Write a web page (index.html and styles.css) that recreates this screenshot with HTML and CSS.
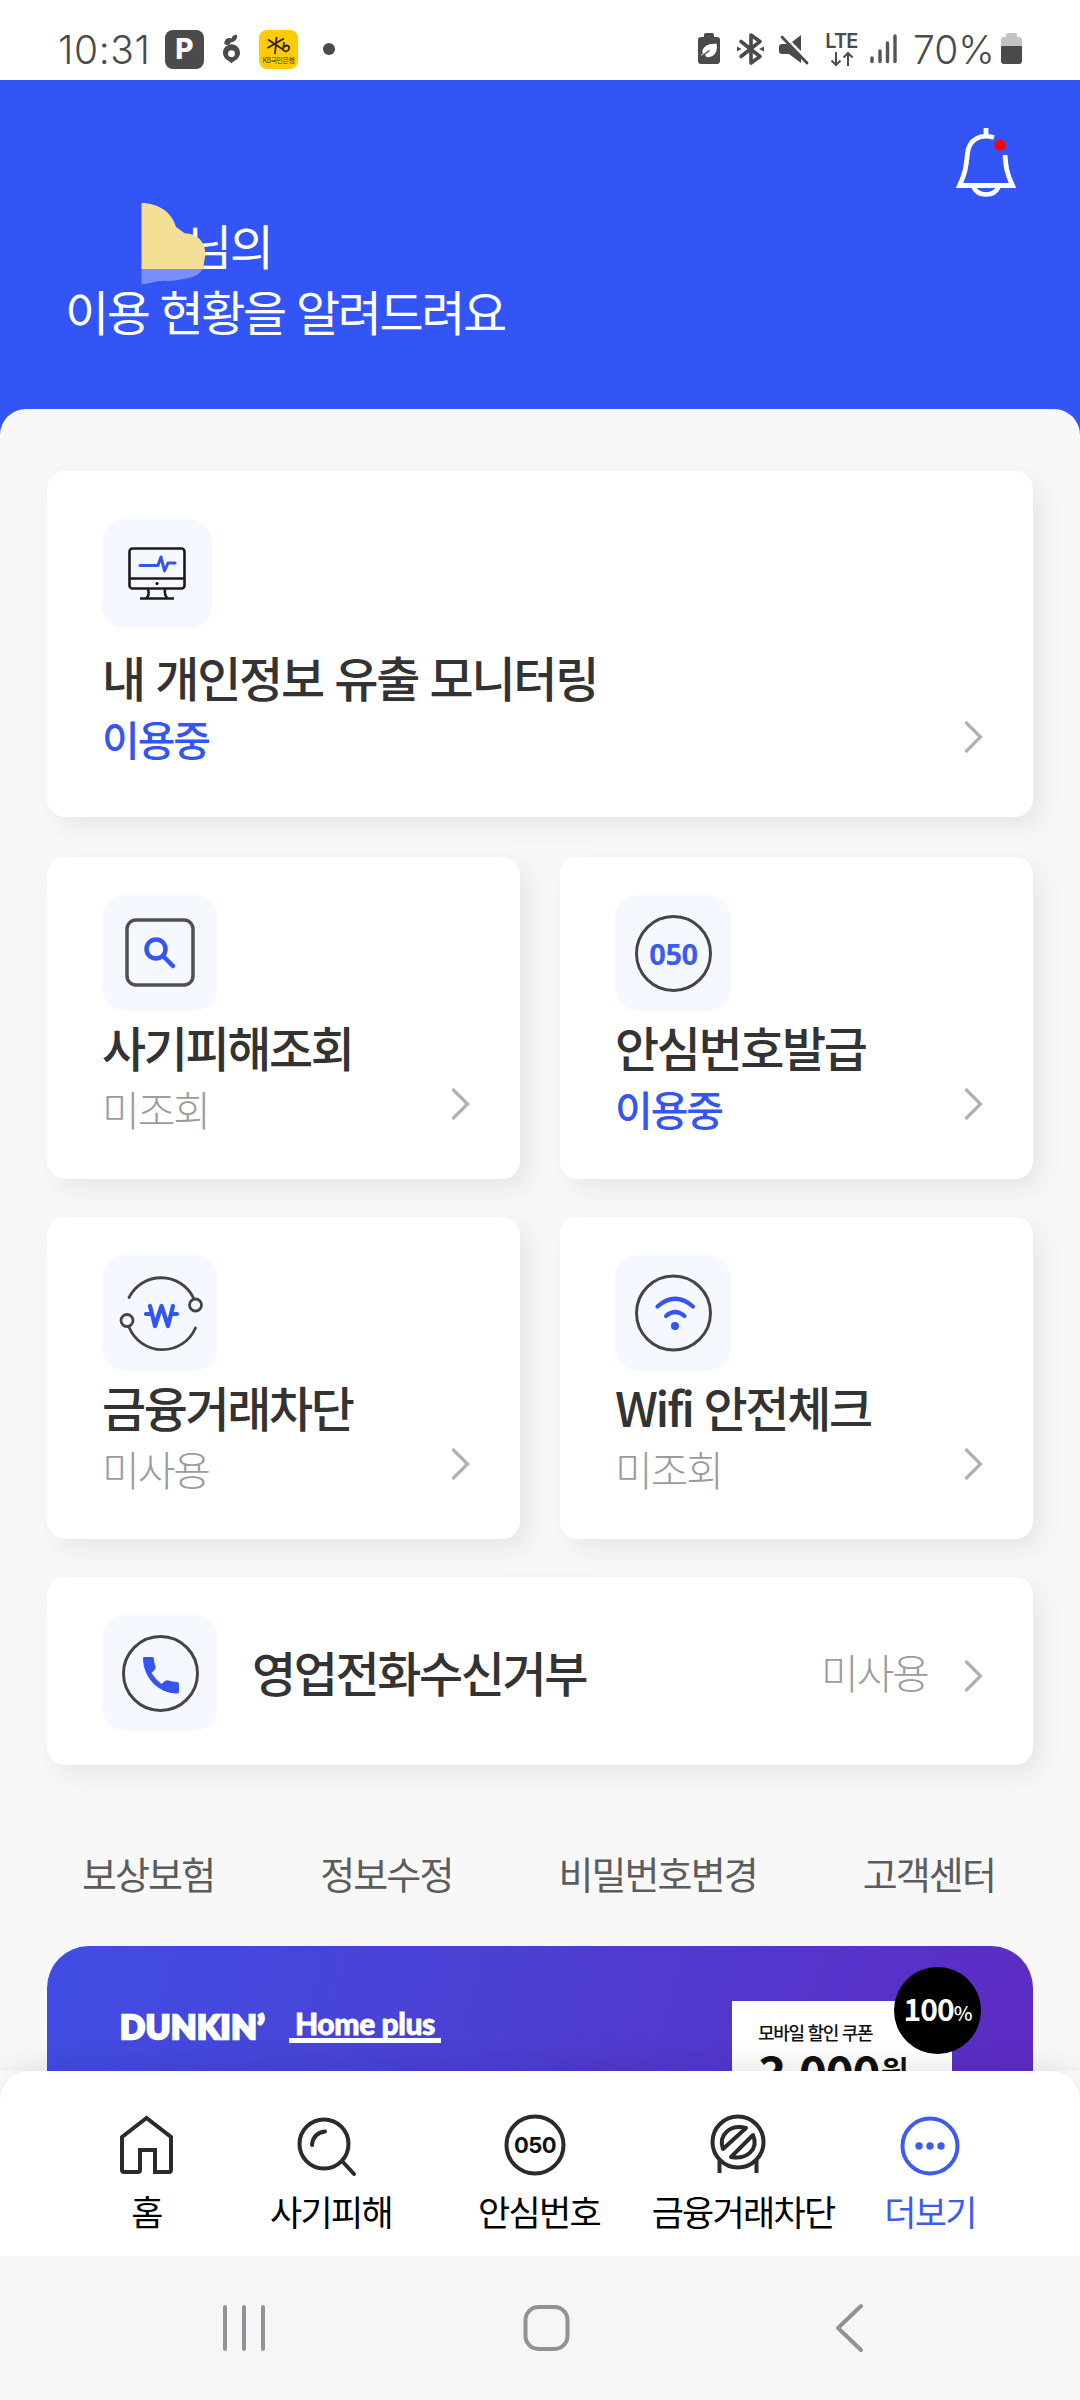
FILE: index.html
```html
<!DOCTYPE html>
<html lang="ko">
<head>
<meta charset="utf-8">
<title>이용 현황</title>
<link rel="stylesheet" href="styles.css">
</head>
<body>
<div class="phone">
  <div class="status-bar">
    <span class="clock">10:31</span>
    <span class="badge-p">P</span>
    <svg class="ic-drop" viewBox="0 0 18 30"><path d="M1.500 10C1 5 5 2 9 4C10 0 15-1 15 1C15 6 11 8 8 8Q7 12 1.500 10Z" fill="#4b4b4b"/><path d="M9 10C14 10 18 14 18 19C18 25 13 27 9 30C5 27 0 25 0 19C0 14 4 10 9 10Z" fill="#4b4b4b"/><circle cx="9" cy="20" r="3.600" fill="#fff"/></svg>
    <span class="kb"><svg viewBox="0 0 39 26"><path d="M9 9.500L24 19.500M8.500 18L25 8.500M17.500 7L16 24M25 12L24 20.500M24.500 17.500C27 14 31 15.500 30 19C29 22 25 22 24 19.500" fill="none" stroke="#2b2410" stroke-width="1.800"/></svg><b>KB국민은행</b></span>
    <span class="dot"></span>
    <span class="grow"></span>
    <svg class="st" style="width:22px" viewBox="0 0 22 32"><path d="M6 1.500Q6 0 8 0H14Q16 0 16 1.500V4H19Q22 4 22 7V28Q22 31 19 31H3Q0 31 0 28V7Q0 4 3 4H6Z" fill="#4b4b4b"/><path d="M3.500 22.500L10 18.500M5 20C5 14 10 11 18 11.500C19 19 15 25 8 23" stroke="#fff" stroke-width="1.500" fill="#fff"/><path d="M4 23L11.500 17.500" stroke="#4b4b4b" stroke-width="1.500"/></svg>
    <svg class="st bt" style="width:27px" viewBox="0 0 27 32"><path d="M4 8.500L23 23.500L14 30V2L23 8.500L4 23.500" fill="none" stroke="#4b4b4b" stroke-width="3.600" stroke-linejoin="round" stroke-linecap="round"/><path d="M0 13.500L4.500 16L0 18.500ZM27 13.500L22 16L27 18.500Z" fill="#4b4b4b"/></svg>
    <svg class="st mute" style="width:30px" viewBox="0 0 30 32"><path d="M0 14Q0 11 3 11H8L22 25V30L10 21H3Q0 21 0 18ZM13 9L22 2V18Z" fill="#4b4b4b"/><path d="M3 4L28 30" stroke="#4b4b4b" stroke-width="2.800" stroke-linecap="round"/></svg>
    <span class="lte"><b>LTE</b><svg viewBox="0 0 24 16"><path d="M6 1V14M1.500 9.500L6 14L10.500 9.500M18 15V2M13.500 6.500L18 2L22.500 6.500" fill="none" stroke="#4b4b4b" stroke-width="2"/></svg></span>
    <svg class="st sig" style="width:27px" viewBox="0 0 27 32"><path d="M2 25V28.500M10 18V28.500M17.500 10V28.500M25 3V28.500" stroke="#555" stroke-width="3.400" stroke-linecap="round"/></svg>
    <span class="percent">70%</span>
    <svg class="st" style="width:21px" viewBox="0 0 21 32"><path d="M5 2Q5 0 7 0H14Q16 0 16 2V4H18Q21 4 21 7V14H0V7Q0 4 3 4H5Z" fill="#c3c3c3"/><path d="M0 13H21V28Q21 31 18 31H3Q0 31 0 28Z" fill="#4b4b4b"/></svg>
  </div>

  <header class="hero">
    <svg class="bell" viewBox="0 0 58 70"><path d="M29 0V8M37 9.500C23 5 12 12 10.500 25C9 40 8 46 2.500 57.500H55.500C50 46 49 40 48 27" fill="none" stroke="#fff" stroke-width="4.800"/><path d="M16.500 59C19 64.500 24 66.500 29 66.500S39 64.500 41.500 59" fill="none" stroke="#fff" stroke-width="4.600"/><circle cx="43" cy="17" r="5.700" fill="#f00"/></svg>
    <h1 class="greeting"><span class="name-line">님의</span>이용 현황을 알려드려요</h1>
    <svg class="smudge" viewBox="0 0 68 86"><path d="M1.500 67V84.500L10 83Q20 80 30 81Q48 79 55 76Q61 73 64 67Z" fill="#788ef8"/><path d="M1.500 3C18 3 32 12 36 27L45 33.500C58 33 67 44 65 57L63 69H1.500Z" fill="#f4e095"/></svg>
  </header>

  <main class="panel">
    <section class="card wide">
      <span class="tile small"><svg viewBox="0 0 58 54"><g fill="none" stroke="#1b1b1e" stroke-width="2.600"><rect x="1.500" y="1.500" width="55" height="40" rx="3"/><path d="M1.500 31.500H56.500M20 42Q22 49 18 51.500M37 42Q36 49 40 51.500M12 51.500H46"/></g><circle cx="29" cy="36.500" r="1.500"/><path d="M12 18.500H30L33 10L36.500 24L40 16H47" fill="none" stroke="#3556ee" stroke-width="3" stroke-linecap="round" stroke-linejoin="round"/></svg></span>
      <h2>내 개인정보 유출 모니터링</h2>
      <div class="foot"><span class="on">이용중</span><svg class="chev" viewBox="0 0 20 34"><path d="M2.500 2L17.500 17L2.500 32"/></svg></div>
    </section>

    <div class="grid">
      <section class="card">
        <span class="tile"><svg viewBox="0 0 116 116"><rect x="25" y="25" width="66" height="65" rx="9" fill="none" stroke="#505052" stroke-width="3.500"/><circle cx="54" cy="54" r="9.500" fill="none" stroke="#3556ee" stroke-width="4.500"/><path d="M61 61L71 71" stroke="#3556ee" stroke-width="4.500" stroke-linecap="round"/></svg></span>
        <h2>사기피해조회</h2>
        <div class="foot"><span class="off">미조회</span><svg class="chev" viewBox="0 0 20 34"><path d="M2.500 2L17.500 17L2.500 32"/></svg></div>
      </section>
      <section class="card">
        <span class="tile"><svg viewBox="0 0 116 116"><circle cx="58.500" cy="58.500" r="37" fill="none" stroke="#454547" stroke-width="3"/><text x="58.500" y="70" class="t050">050</text></svg></span>
        <h2>안심번호발급</h2>
        <div class="foot"><span class="on">이용중</span><svg class="chev" viewBox="0 0 20 34"><path d="M2.500 2L17.500 17L2.500 32"/></svg></div>
      </section>
      <section class="card">
        <span class="tile"><svg viewBox="0 0 116 116"><g fill="none" stroke="#454547" stroke-width="2.800" stroke-linecap="round"><path d="M27 42.500A36 36 0 0 1 91.500 43M93.500 73A36 36 0 0 1 27 72"/><circle cx="93.500" cy="50" r="6"/><circle cx="25" cy="65.500" r="6"/></g><path d="M48 51L53 71L59.500 51L66 71L71 51M44 59H49M70 59H75" fill="none" stroke="#3556ee" stroke-width="4.200" stroke-linecap="round" stroke-linejoin="round"/></svg></span>
        <h2>금융거래차단</h2>
        <div class="foot"><span class="off">미사용</span><svg class="chev" viewBox="0 0 20 34"><path d="M2.500 2L17.500 17L2.500 32"/></svg></div>
      </section>
      <section class="card">
        <span class="tile"><svg viewBox="0 0 116 116"><circle cx="58.500" cy="58" r="37" fill="none" stroke="#454547" stroke-width="3"/><path d="M42.500 51.500Q60 36 78 51.500M51 61Q60 53 69.500 61" fill="none" stroke="#3556ee" stroke-width="4.200" stroke-linecap="round"/><circle cx="60" cy="71" r="4" fill="#3556ee"/></svg></span>
        <h2>Wifi 안전체크</h2>
        <div class="foot"><span class="off">미조회</span><svg class="chev" viewBox="0 0 20 34"><path d="M2.500 2L17.500 17L2.500 32"/></svg></div>
      </section>
    </div>

    <section class="card row">
      <span class="tile"><svg viewBox="0 0 116 116"><circle cx="58.500" cy="58.500" r="37" fill="none" stroke="#454547" stroke-width="3"/><path d="M41 43Q41 42 42.500 42H50Q52 42 52 44Q52 48 53.500 51.500Q54 53.500 52.500 55L49.500 58Q54 65 59.500 69L63 66Q64.500 65 66.500 65.500Q70 66.500 75 67Q77 67 77 69V77Q77 78.500 75 78.500C56 78.500 41 62 41 43Z" fill="#3556ee"/></svg></span>
      <h2>영업전화수신거부</h2>
      <span class="off">미사용</span>
      <svg class="chev" viewBox="0 0 20 34"><path d="M2.500 2L17.500 17L2.500 32"/></svg>
    </section>

    <nav class="links"><a>보상보험</a><a>정보수정</a><a>비밀번호변경</a><a>고객센터</a></nav>

    <section class="banner">
      <span class="dunkin">DUNKIN’</span>
      <span class="homeplus">Home plus</span>
      <div class="coupon"><small>모바일 할인 쿠폰</small><strong>3,000<i>원</i></strong><span class="round">100<i>%</i></span></div>
    </section>
  </main>

  <nav class="tabs">
    <a><svg viewBox="0 0 64 64"><path d="M7 24L31.500 5L56 24V57Q56 59 54 59H40V37H25V57Q25 59 23 59H9Q7 59 7 57Z" class="ln"/></svg>홈</a>
    <a class="shift"><svg viewBox="0 0 64 64"><circle cx="29" cy="31" r="24.500" class="ln"/><path d="M47 48L59 61" class="ln" stroke-linecap="round"/><path d="M17 32Q18 20 30 18.500" class="ln" stroke-linecap="round"/></svg>사기피해</a>
    <a class="shift"><svg viewBox="0 0 64 64"><circle cx="32" cy="32" r="28.500" class="ln"/><text x="32" y="39.500" class="n050">050</text></svg>안심번호</a>
    <a class="shift block"><svg viewBox="0 0 64 64"><circle cx="32" cy="29" r="25.500" class="ln"/><path d="M17 36C12 22 24 11 40 15ZM47 22C53 36 41 47 25 44Z" class="ln" stroke-linejoin="round"/><path d="M13.500 47V60M50.500 47V60" class="ln"/></svg>금융거래차단</a>
    <a class="active"><svg viewBox="0 0 64 64"><circle cx="32" cy="33" r="27.500" fill="none" stroke="#3c5cf0" stroke-width="4"/><g fill="#3c5cf0"><circle cx="21" cy="33" r="3.700"/><circle cx="32" cy="33" r="3.700"/><circle cx="43" cy="33" r="3.700"/></g></svg>더보기</a>
  </nav>

  <div class="sys">
    <svg viewBox="0 0 50 50"><path d="M5 4V46M24 4V46M43 4V46"/></svg>
    <svg viewBox="0 0 50 50"><rect x="4.500" y="4" width="42" height="42" rx="13"/></svg>
    <svg viewBox="0 0 50 50"><path d="M39 3L16 25L39 47"/></svg>
  </div>
</div>
</body>
</html>
```

FILE: styles.css
```css
* { box-sizing: border-box; }
body { margin: 0; font-family: "Noto Sans CJK KR", sans-serif; }
h1, h2 { margin: 0; }
svg { display: block; flex: none; overflow: visible; }
.greeting, .card h2, .on, .off, .links a, .tabs a { letter-spacing: -0.05em; }
.phone { width: 1080px; height: 2400px; overflow: hidden; display: flex; flex-direction: column; background: #fff; }

.status-bar { height: 80px; flex: none; display: flex; align-items: flex-start; padding: 30px 58px 0 58px; color: #4b4b4b; }
.clock, .percent { font: 300 39px/39px Inter, sans-serif; white-space: nowrap; }
.clock { width: 107px; letter-spacing: 0.6px; }
.badge-p { width: 39px; height: 39px; border-radius: 8px; background: #4b4b4b; color: #fff; font: 800 28px/39px Inter, sans-serif; text-align: center; }
.ic-drop { width: 17px; height: 30px; margin: 4px 19px 0 19px; }
.kb { width: 39px; height: 39px; border-radius: 8px; background: #fecb05; display: flex; flex-direction: column; align-items: center; overflow: hidden; }
.kb svg { width: 39px; height: 26px; }
.kb b { font-size: 7px; line-height: 9px; font-weight: 400; color: #4a3b08; white-space: nowrap; letter-spacing: -0.5px; }
.dot { width: 12px; height: 12px; border-radius: 50%; background: #4b4b4b; margin: 13px 0 0 25px; }
.grow { flex: 1; }
.st { height: 32px; margin-top: 3px; }
.bt { margin-left: 17px; }
.mute { margin-left: 15px; }
.lte { width: 33px; margin: 3px 0 0 16px; display: flex; flex-direction: column; align-items: center; }
.lte b { font: 600 20px/17px Inter, sans-serif; letter-spacing: -0.8px; }
.lte svg { width: 24px; height: 16px; margin-top: 1px; }
.sig { margin-left: 12px; }
.percent { width: 104px; padding-left: 16px; letter-spacing: 0; }

.hero { height: 359px; flex: none; background: #3355f5; position: relative; padding: 131px 65px 0; color: #fff; }
.bell { position: absolute; left: 957px; top: 48px; width: 58px; height: 70px; }
.greeting { font-size: 48px; font-weight: 400; line-height: 66px; white-space: nowrap; }
.name-line { display: block; padding-left: 123px; }
.smudge { position: absolute; left: 140px; top: 120px; width: 68px; height: 86px; }

.panel { flex: 1; min-height: 0; margin-top: -30px; position: relative; background: #f8f8f8; border-radius: 26px 26px 0 0; padding: 62px 47px 0; overflow: hidden; display: flex; flex-direction: column; }
.card { background: #fff; border-radius: 18px; box-shadow: 9px 10px 26px rgba(0, 0, 0, .075); padding: 38px 50px 0 55px; height: 322px; display: flex; flex-direction: column; }
.card h2 { font-size: 48px; font-weight: 500; line-height: 66px; color: #333; white-space: nowrap; }
.wide { height: 346px; padding-top: 48px; flex: none; }
.grid { display: grid; grid-template-columns: 473px 473px; gap: 38px 40px; margin: 40px 0 38px; }
.tile { width: 116px; height: 116px; border-radius: 24px; background: #f5f8ff; margin-bottom: 2px; display: flex; align-items: center; justify-content: center; flex: none; }
.tile svg { width: 116px; height: 116px; }
.small { width: 110px; height: 110px; margin-bottom: 14px; }
.small svg { width: 58px; height: 54px; }
.card.wide h2 { letter-spacing: -2.2px; }
.foot { display: flex; justify-content: space-between; align-items: center; height: 58px; font-size: 41px; }
.chev { width: 20px; height: 34px; margin-bottom: 8px; fill: none; stroke: #b0b0b0; stroke-width: 3.2; }
.wide .chev { margin-bottom: 2px; }
.on { color: #3556ee; font-weight: 500; }
.off { color: #9c9c9c; font-weight: 300; font-size: 41px; }
.row { height: 188px; flex: none; flex-direction: row; align-items: center; padding-top: 0; padding-bottom: 0; }
.row .tile { margin: 4px 34px 0 0; }
.row h2 { flex: 1; }
.row .off { margin-right: 35px; }
.row .chev { margin: 9px 0 0; }
.t050 { font: 700 29px "Noto Sans", sans-serif; letter-spacing: -0.4px; fill: #3c5cf0; text-anchor: middle; }

.links { display: flex; justify-content: space-between; margin: 78px 38px 43px 35px; font-size: 38px; line-height: 60px; color: #5c5c5c; }
.links a { white-space: nowrap; }

.banner { height: 300px; flex: none; border-radius: 42px 42px 0 0; background: linear-gradient(105deg, #404de2 0%, #4b40d4 42%, #5e2ac2 100%); color: #fff; display: flex; align-items: flex-start; padding: 55px 81px 0 73px; }
.dunkin { width: 169px; margin-top: 8px; font: 900 33px/34px Lato, sans-serif; -webkit-text-stroke: 2.6px #fff; letter-spacing: 0.6px; }
.homeplus { width: 152px; margin-top: 6px; height: 36px; border-bottom: 5px solid #fff; text-align: center; font: 900 30px/32px Lato, sans-serif; letter-spacing: -0.4px; white-space: nowrap; -webkit-text-stroke: 0.8px #fff; }
.coupon { position: relative; width: 220px; height: 240px; margin-left: auto; background: #fff; color: #111; padding: 16px 26px; display: flex; flex-direction: column; }
.coupon small { font-size: 18px; line-height: 30px; font-weight: 500; white-space: nowrap; letter-spacing: -1.3px; }
.coupon strong { display: flex; align-items: flex-start; font-size: 48px; line-height: 50px; white-space: nowrap; letter-spacing: -1.6px; }
.coupon i { font-style: normal; font-size: 30px; line-height: 44px; margin-left: 2px; }
.round { position: absolute; left: 162px; top: -34px; width: 87px; height: 87px; border-radius: 50%; background: #000; color: #fff; font-size: 30px; font-weight: 700; line-height: 83px; text-align: center; letter-spacing: -1px; }
.coupon .round i { font-size: 20px; font-weight: 500; line-height: 1; margin: 0; }

.tabs { height: 185px; flex: none; position: relative; background: #fff; border-radius: 30px 30px 0 0; display: grid; grid-template-columns: 185px 184px 232px 176px 198px; padding: 42px 0 0 54px; box-shadow: 0 0 36px rgba(0, 0, 0, .12); }
.tabs a { display: flex; flex-direction: column; align-items: center; font-size: 35px; line-height: 50px; font-weight: 400; color: #000; white-space: nowrap; }
.tabs svg { width: 64px; height: 64px; margin-bottom: 9px; }
.tabs .shift svg { margin-right: 8px; }
.tabs .block svg { margin-right: 11px; }
.tabs a.active { color: #3c5cf0; }
.ln { fill: none; stroke: #2b2b2b; stroke-width: 4; }
.n050 { font: 700 22px Inter, sans-serif; letter-spacing: -0.5px; text-anchor: middle; fill: #111; }

.sys { height: 144px; flex: none; background: #f5f6f8; display: flex; padding: 47px 0 0 220px; gap: 251px; position: relative; }
.sys svg { width: 50px; height: 50px; fill: none; stroke: #929292; stroke-width: 4; stroke-linecap: round; stroke-linejoin: round; }
```
